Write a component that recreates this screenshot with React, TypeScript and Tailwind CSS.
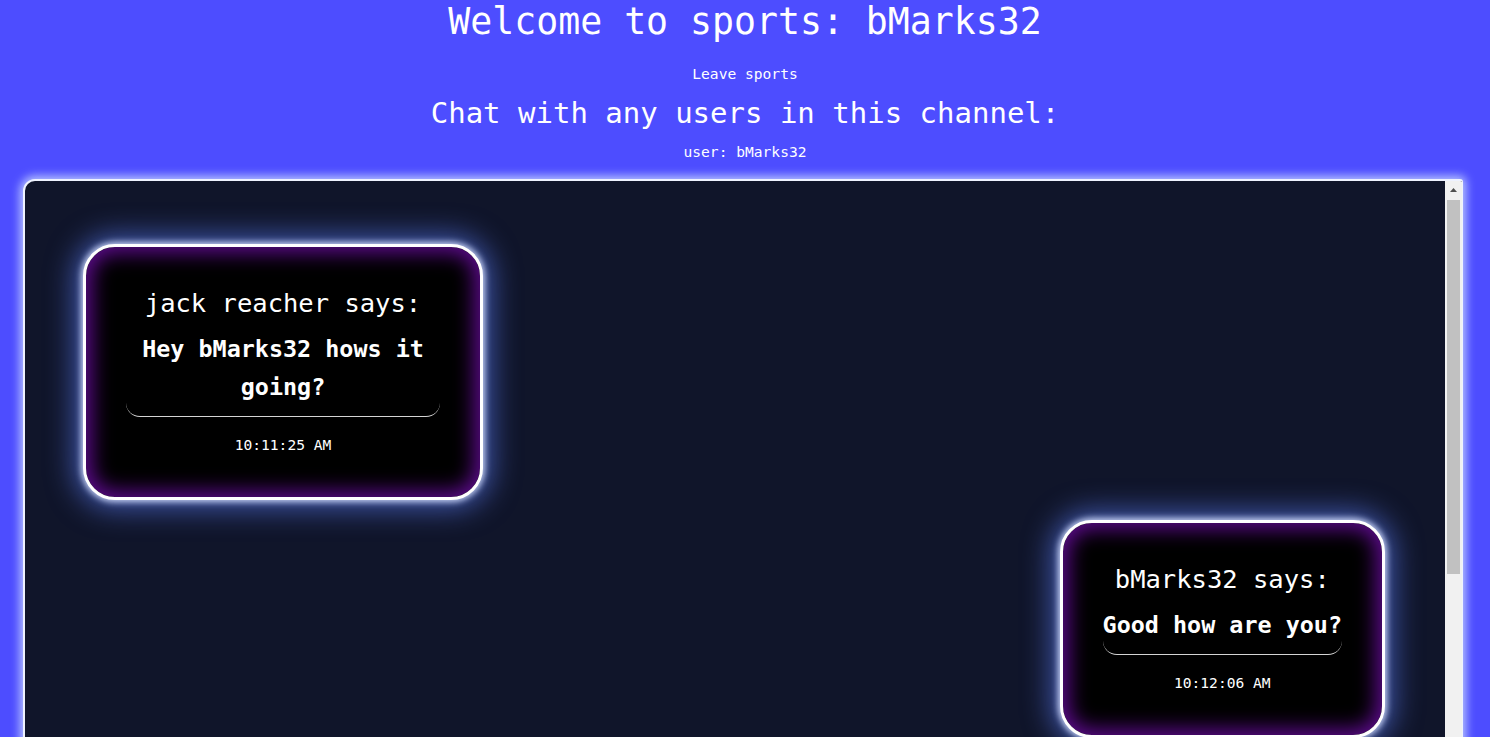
const messages = [
  { user: "jack reacher", text: "Hey bMarks32 hows it going?", time: "10:11:25 AM", mine: false },
  { user: "bMarks32", text: "Good how are you?", time: "10:12:06 AM", mine: true },
];

function Bubble({ user, text, time, mine }: { user: string; text: string; time: string; mine: boolean }) {
  return (
    <div className={mine ? "flex justify-end" : "flex justify-start"}>
      <div className="max-w-[400px] bg-black border-[3px] border-white rounded-[32px] px-10 pt-10 pb-[42px] text-center text-white shadow-[0_0_6px_2px_rgba(215,225,255,0.9),0_0_28px_9px_rgba(95,130,255,0.6),inset_0_0_20px_6px_#5e0b8e]">
        <h3 className="text-[25.5px] leading-8">{user} says:</h3>
        <p className="mt-[11px] text-[23.4px] leading-[38px] font-bold pb-[10px] border-b border-[#d4d4d4] rounded-b-[14px]">
          {text}
        </p>
        <p className="mt-[18px] text-[14.6px] leading-5">{time}</p>
      </div>
    </div>
  );
}

export default function App() {
  return (
    <div className="h-screen overflow-hidden bg-[#4d4dff] text-white text-center font-['DejaVu_Sans_Mono',monospace]">
      <h1 className="text-[36.5px] leading-[44px]">Welcome to sports: bMarks32</h1>
      <button className="mt-5 text-[14.6px] leading-5">Leave sports</button>
      <h2 className="mt-[9px] text-[29px] leading-9">Chat with any users in this channel:</h2>
      <p className="mt-[11px] text-[14.6px] leading-5">user: bMarks32</p>

      <div className="mt-[17px] ml-[23px] mr-[27px] h-[665px] flex overflow-hidden bg-[#10152a] border-2 border-r border-[#eef2ff] rounded-tl-[12px] rounded-tr-[3px] shadow-[0_0_10px_3px_rgba(205,220,255,0.85)]">
        <div className="flex-1 overflow-hidden pt-[63px] pl-[58px] pr-[60px] pb-16 flex flex-col gap-5">
          {messages.map((m, i) => (
            <Bubble key={i} {...m} />
          ))}
        </div>

        {/* scrollbar */}
        <div className="w-[17px] shrink-0 bg-[#f1f1f1] flex flex-col items-center">
          <div className="h-[17px] w-full flex items-center justify-center">
            <svg width="7" height="4" viewBox="0 0 7 4">
              <path d="M0 4 L3.5 0 L7 4 Z" fill="#505050" />
            </svg>
          </div>
          <div className="mt-[2px] w-[13px] h-[374px] bg-[#c1c1c1]" />
        </div>
      </div>
    </div>
  );
}
